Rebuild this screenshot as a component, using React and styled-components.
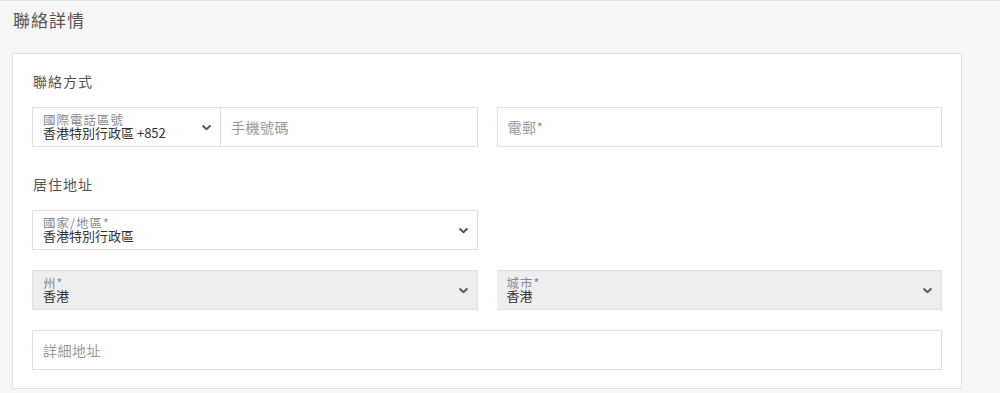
import React from 'react'
import styled, { createGlobalStyle } from 'styled-components'

const GlobalStyle = createGlobalStyle`
	body {
		margin: 0;
		background: #f6f6f6;
		font-family: "Noto Sans CJK TC", "Noto Sans", sans-serif;
		color: #333;
	}
`

const Page = styled.div`
	border-top: 1px solid #e4e4e4;
	padding: 0 38px 4px 12px;
`

const Title = styled.h2`
	margin: 0 0 21px 1px;
	padding-top: 7px;
	font-size: 17px;
	line-height: 24px;
	font-weight: 400;
	letter-spacing: 1px;
	color: #555;
`

const Card = styled.div`
	background: #fff;
	border: 1px solid #e0e0e0;
	padding: 17px 19px 18px;
`

const SectionLabel = styled.div`
	font-size: 14px;
	line-height: 20px;
	letter-spacing: 1px;
	color: #555;
	margin: ${({ $first }) => ($first ? '0' : '27px')} 0 16px 1px;
`

const Grid = styled.div`
	display: grid;
	grid-template-columns: 1fr 1fr;
	column-gap: 19px;
	row-gap: 20px;
`

const Full = styled.div`
	grid-column: 1 / -1;
`

const Box = styled.div`
	display: flex;
	align-items: center;
	height: 40px;
	box-sizing: border-box;
	border: 1px solid #e0e0e0;
	background: ${({ $disabled }) => ($disabled ? '#eeeeee' : '#fff')};
	flex: ${({ $grow }) => ($grow ? 1 : 'none')};
	width: ${({ $width }) => $width || 'auto'};
	& + & {
		border-left: none;
	}
`

const Group = styled.div`
	display: flex;
`

const SelectText = styled.div`
	flex: 1;
	padding: 0 0 1px 10px;
	display: flex;
	flex-direction: column;
`

const Small = styled.span`
	font-size: 12.5px;
	line-height: 13px;
	color: #8a8a8a;
	letter-spacing: 1px;
`

const Value = styled.span`
	font-size: 13px;
	line-height: 14px;
	color: #333;
`

const Placeholder = styled.span`
	padding-left: 10px;
	font-size: 14px;
	letter-spacing: 0.5px;
	color: #999;
`

const Chevron = styled.svg`
	width: 11px;
	height: 7px;
	margin-right: 8px;
	flex: none;
`

function Arrow() {
	return (
		<Chevron viewBox="0 0 11 7">
			<path d="M1.5 1.5 L5.5 5.2 L9.5 1.5" fill="none" stroke="#555" strokeWidth="2" />
		</Chevron>
	)
}

function Select({ label, value, disabled, width, grow }) {
	return (
		<Box $disabled={disabled} $width={width} $grow={grow}>
			<SelectText>
				<Small>{label}</Small>
				<Value>{value}</Value>
			</SelectText>
			<Arrow />
		</Box>
	)
}

function Input({ placeholder, grow }) {
	return (
		<Box $grow={grow}>
			<Placeholder>{placeholder}</Placeholder>
		</Box>
	)
}

export default function App() {
	return (
		<>
			<GlobalStyle />
			<Page>
				<Title>聯絡詳情</Title>
				<Card>
					<SectionLabel $first>聯絡方式</SectionLabel>
					<Grid>
						<Group>
							<Select label="國際電話區號" value="香港特別行政區 +852" width="189px" />
							<Input placeholder="手機號碼" grow />
						</Group>
						<Group>
							<Input placeholder="電郵*" grow />
						</Group>
					</Grid>

					<SectionLabel>居住地址</SectionLabel>
					<Grid>
						<Select label="國家/地區*" value="香港特別行政區" />
						<div />
						<Select label="州*" value="香港" disabled />
						<Select label="城市*" value="香港" disabled />
						<Full>
							<Input placeholder="詳細地址" />
						</Full>
					</Grid>
				</Card>
			</Page>
		</>
	)
}
